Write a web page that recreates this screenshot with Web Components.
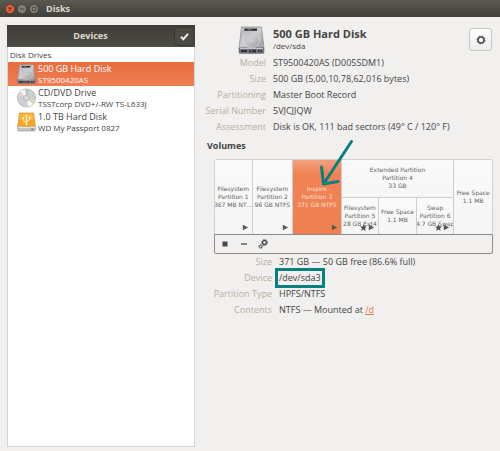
<!DOCTYPE html>
<html lang="en">
<head>
<meta charset="utf-8">
<title>Disks</title>
<style>
html, body { margin: 0; }
body { background: #f1f0ee; color: #444; font: 9px/16px "Open Sans", "Noto Sans", sans-serif; }
</style>
</head>
<body>
<disks-window></disks-window>
<script>
function define(name, html, setup) {
  const template = document.createElement('template');
  template.innerHTML = html;
  customElements.define(name, class extends HTMLElement {
    constructor() {
      super();
      this.attachShadow({ mode: 'open' }).append(template.content.cloneNode(true));
    }
    connectedCallback() { if (setup) setup(this, this.shadowRoot); }
  });
}

const DRIVES = {
  disk: `<svg viewBox="0 0 27 28">
    <defs>
      <linearGradient id="m" x1="0" y1="0" x2="1" y2="1"><stop offset="0" stop-color="#b4b4b8"/><stop offset=".5" stop-color="#cbcbce"/><stop offset="1" stop-color="#939398"/></linearGradient>
    </defs>
    <path d="M3.5 1h20l2.500 21H1z" fill="url(#m)" stroke="#8b8b90" stroke-width=".7"/>
    <path d="M1 22h25v4.500q0 .9-.9.9H1.900q-.9 0-.9-.9z" fill="#77777c" stroke="#606066" stroke-width=".5"/>
    <path d="M2 22.500h23" stroke="#dadadd" stroke-width=".8"/>
    <rect x="6.500" y="2.600" width="12.500" height="2.200" fill="#29292e"/>
    <path d="M9.500 3.700h4" stroke="#a4a4a8" stroke-width=".7"/>
    <path d="M7.500 9a8.500 7.500 0 1 0 12 0M11 14a3.500 2.500 0 0 0 6 0" fill="none" stroke="#e6e6e9" stroke-width=".6"/>
    <circle cx="4.700" cy="3.500" r=".6" fill="#f2f2f2"/><circle cx="22" cy="3.500" r=".6" fill="#f2f2f2"/>
    <circle cx="3" cy="19.500" r=".6" fill="#eee"/><circle cx="24" cy="19.500" r=".6" fill="#eee"/>
    <path d="M3 24h6v2H3zM11 23.800h7v2.400h-7zM20 24h1.500v2H20zM22.500 24H24v2h-1.500z" fill="#2d3037"/>
    <path d="M12 24.800h3" stroke="#7290b8" stroke-width=".8"/>
  </svg>`,
  disc: `<svg viewBox="0 0 20 20">
    <circle cx="10" cy="10" r="9.500" fill="#cfcfd1" stroke="#a2a2a5" stroke-width=".7"/>
    <path d="M10 10 3.500 3.200A9.200 9.200 0 0 1 8.500 1z" fill="#f8f8f8"/>
    <path d="M10 10 1.300 7a9.200 9.200 0 0 1 2.200-3.800z" fill="#e5cfe0"/>
    <path d="M10 10 8.500 1a9.200 9.200 0 0 1 4.500.4z" fill="#b9c8ba"/>
    <path d="M10 10 18.700 12a9.200 9.200 0 0 1-2.200 4.500z" fill="#d3e2ad"/>
    <path d="M10 10l6.500 6.500a9.200 9.200 0 0 1-4.500 2.500z" fill="#fafafa"/>
    <path d="M10 10l2 9a9.200 9.200 0 0 1-4.500-.300z" fill="#cfd6e3"/>
    <circle cx="10" cy="10" r="3.200" fill="#dedee0" stroke="#a5a5a8" stroke-width=".6"/>
    <circle cx="10" cy="10" r="1.400" fill="#fff" stroke="#959598" stroke-width=".5"/>
  </svg>`,
  usb: `<svg viewBox="0 0 20 20">
    <path d="M2.500.5h15L19.300 15H.7z" fill="#f6a623" stroke="#d98712" stroke-width=".6"/>
    <path d="M3.200 1.200h13.600l.9 7H2.300z" fill="#fbbe4b" opacity=".7"/>
    <path d="M.7 15h18.600v3.300q0 1.200-1.200 1.200H1.900q-1.200 0-1.200-1.200z" fill="#c5c5c4" stroke="#8c8c88" stroke-width=".6"/>
    <path d="M1.200 15.500h17.600" stroke="#f8f8f5"/>
    <path d="M15 17.600h2.200" stroke="#4a4a4a"/>
    <path d="M10 3v9.500M10 10.500 6.500 8.500V6M10 9l3.500-1.500V5.500" fill="none" stroke="#fff4d8" stroke-width="1"/>
    <path d="M8.700 4 10 1.700 11.300 4z" fill="#fff4d8"/><circle cx="10" cy="12.300" r="1.200" fill="#fff4d8"/>
    <circle cx="6.500" cy="5.800" r="1" fill="#fff4d8"/><path d="M12.500 4.300h2v2h-2z" fill="#fff4d8"/>
  </svg>`
};

define('drive-icon', `<style>
:host { display: block; flex: none; width: 19px; height: 20px; }
#art { height: 100%; }
svg { display: block; width: 100%; height: 100%; }
</style><div id="art"></div>`,
(host, root) => { root.getElementById('art').innerHTML = DRIVES[host.getAttribute('kind')]; });

define('title-bar', `<style>
:host { display: flex; align-items: center; gap: 2px; height: 17px; box-sizing: border-box; padding: 1px 5px 0; background: linear-gradient(#5a5850, #403f39); color: #dfdbd2; }
button { width: 10px; height: 10px; padding: 0; border: 0; background: none; }
svg { display: block; width: 10px; height: 10px; }
h1 { margin: 0 0 0 5px; font-size: 9px; line-height: 14px; font-weight: 700; }
</style>
<button aria-label="Close"><svg viewBox="0 0 10 10"><circle cx="5" cy="5" r="4.500" fill="#ee6136" stroke="#373631" stroke-width=".6"/><path d="m3.500 3.500 3 3m0-3-3 3" stroke="#6b2c1a" stroke-width="1.100"/></svg></button>
<button aria-label="Minimize"><svg viewBox="0 0 10 10"><circle cx="5" cy="5" r="4.500" fill="#828078" stroke="#373631" stroke-width=".6"/><path d="M3 5h4" stroke="#4a4943"/></svg></button>
<button aria-label="Maximize"><svg viewBox="0 0 10 10"><circle cx="5" cy="5" r="4.500" fill="#828078" stroke="#373631" stroke-width=".6"/><path d="M3.300 3.500h3.400v3H3.300z" fill="none" stroke="#4a4943" stroke-width=".9"/></svg></button>
<h1><slot></slot></h1>`);

define('device-row', `<style>
:host { display: block; }
button { display: flex; align-items: center; gap: 2px; width: 100%; height: 24px; padding: 0 9px; border: 0; background: none; color: inherit; font: inherit; text-align: left; }
:host([selected]) button { background: linear-gradient(#e86c3d, #f07f53); color: #fff; }
.text { display: block; line-height: 11px; }
.name, .model { display: block; white-space: nowrap; }
.model { font-size: 8px; }
</style>
<button><drive-icon></drive-icon><span class="text"><span class="name"><slot></slot></span><span class="model"><slot name="model"></slot></span></span></button>`,
(host, root) => {
  const icon = document.createElement('drive-icon');
  icon.setAttribute('kind', host.getAttribute('kind'));
  root.querySelector('drive-icon').replaceWith(icon);
});

define('device-panel', `<style>
:host { display: flex; flex-direction: column; box-sizing: border-box; background: #fff; border: 1px solid #d6d4d0; border-top: 0; }
header { display: flex; align-items: center; height: 22px; margin: 0 -1px; background: linear-gradient(#3d3c37, #4e4d46); color: #dfdbd2; }
h2 { flex: 1; margin: 0; text-align: center; font-size: 9px; line-height: 14px; }
button { width: 20px; height: 19px; margin-right: 1px; padding: 0; border: 1px solid #3a3934; border-radius: 3px; background: #4b4a43; display: grid; place-items: center; }
svg { display: block; width: 9px; height: 9px; }
h3 { margin: 0; padding-left: 2px; font-size: 8px; line-height: 15px; font-weight: 400; }
</style>
<header><h2>Devices</h2><button aria-label="Select devices"><svg viewBox="0 0 9 9"><path d="m1 4.800 2.300 2.400L8 1.800" fill="none" stroke="#eeebe4" stroke-width="2"/></svg></button></header>
<h3>Disk Drives</h3>
<slot></slot>`);

define('drive-header', `<style>
:host { display: flex; align-items: flex-start; gap: 8px; height: 30px; padding-left: 31px; }
drive-icon { width: 27px; height: 28px; margin-top: 1px; }
.text { flex: 1; white-space: nowrap; }
h2 { margin: 2px 0 0; font-size: 11px; line-height: 14px; }
p { margin: 0; font-size: 8px; line-height: 10px; }
button { width: 23px; height: 23px; margin: 3px 1px 0 0; padding: 0; border: 1px solid #c9c6c1; border-radius: 3px; background: linear-gradient(#fdfdfd, #ededec); display: grid; place-items: center; }
svg { display: block; width: 10px; height: 10px; }
</style>
<drive-icon kind="disk"></drive-icon>
<div class="text"><h2><slot></slot></h2><p><slot name="path"></slot></p></div>
<button aria-label="Drive options"><svg viewBox="0 0 10 10"><circle cx="5" cy="5" r="4" fill="none" stroke="#4d4d4d" stroke-width="1" stroke-dasharray="1.600 1.542"/><circle cx="5" cy="5" r="3" fill="none" stroke="#4d4d4d" stroke-width="1.600"/></svg></button>`);

define('info-row', `<style>
:host { display: flex; gap: 7px; line-height: 16px; white-space: nowrap; }
.label { flex: none; width: var(--label-width, 59px); display: flex; justify-content: flex-end; color: #b7ae9f; }
.value { position: relative; }
:host([marked]) .value::after { content: ""; position: absolute; inset: -2px -4px; border: 3px solid #07807f; pointer-events: none; }
::slotted(a) { color: #ef7446; }
</style><span class="label"><slot name="label"></slot></span><span class="value"><slot></slot></span>`);

define('volume-block', `<style>
:host { display: grid; position: relative; min-width: 0; }
button { display: grid; align-content: center; min-width: 0; padding: 0; border: 0; background: linear-gradient(#fafafa, #f5f5f5); color: #636363; font: 6px/8px "DejaVu Sans", sans-serif; text-align: center; white-space: pre; overflow: hidden; justify-content: center; }
:host([selected]) button { background: linear-gradient(#f4a080, #f08254 14px, #ee8052); color: #fce0d3; }
.marks { position: absolute; right: 3px; bottom: 3px; display: flex; gap: 1px; pointer-events: none; }
.marks svg { display: block; width: 7px; height: 7px; }
:host(:not([starred])) .star { display: none; }
:host([free]) .marks { display: none; }
::slotted(svg) { position: absolute; left: 24px; top: -22px; width: 38px; height: 52px; pointer-events: none; z-index: 2; }
</style>
<button><slot></slot></button>
<span class="marks"><svg class="star" viewBox="0 0 7 7"><path d="M3.500 0 4.500 2.400 7 2.600 5.100 4.300 5.700 7 3.500 5.500 1.300 7 1.900 4.300 0 2.600 2.500 2.400z" fill="#505050"/></svg><svg viewBox="0 0 7 7"><path d="M.8.700 6.200 3.500.8 6.300z" fill="#5a5550"/></svg></span>
<slot name="pointer"></slot>`);

define('volume-map', `<style>
:host { display: grid; grid-template-columns: 37fr 40fr 48fr 113fr 38fr; gap: 1px; height: 75px; box-sizing: border-box; background: #d0cecb; border: 1px solid #d3d1ce; border-bottom: 0; border-radius: 3px 3px 0 0; }
.extended { display: grid; grid-template: 1fr 1fr / repeat(3, minmax(0, 1fr)); gap: 1px; }
.wide { grid-column: 1 / -1; }
</style>
<volume-block>Filesystem
Partition 1
367 MB NT…</volume-block>
<volume-block>Filesystem
Partition 2
96 GB NTFS</volume-block>
<volume-block selected>Inspire
Partition 3
371 GB NTFS<svg slot="pointer" viewBox="0 0 38 52"><path d="M34.500 3.500 6.500 46M4.500 29 6.500 46 21 43.500" fill="none" stroke="#07807f" stroke-width="3" stroke-linecap="round" stroke-linejoin="round"/></svg></volume-block>
<div class="extended">
  <volume-block free class="wide">Extended Partition
Partition 4
33 GB</volume-block>
  <volume-block starred>Filesystem
Partition 5
28 GB Ext4</volume-block>
  <volume-block free>Free Space
1.1 MB</volume-block>
  <volume-block starred>Swap
Partition 6
4.7 GB Swap</volume-block>
</div>
<volume-block free>Free Space
1.1 MB</volume-block>`);

define('volume-toolbar', `<style>
:host { display: flex; align-items: center; gap: 9px; height: 20px; box-sizing: border-box; padding: 0 5px; border: 1px solid #8c8b89; border-radius: 0 0 2px 2px; }
button { width: 10px; height: 12px; padding: 0; border: 0; background: none; display: grid; place-items: center; }
svg { display: block; width: 10px; height: 10px; }
</style>
<button aria-label="Unmount"><svg viewBox="0 0 10 10"><path d="M2.500 2.500h5v5h-5z" fill="#484848"/></svg></button>
<button aria-label="Delete partition"><svg viewBox="0 0 10 10"><path d="M2 5h6" stroke="#484848" stroke-width="1.300"/></svg></button>
<button aria-label="More actions"><svg viewBox="0 0 10 10"><g fill="none" stroke="#484848"><circle cx="6.500" cy="3.500" r="2" stroke-width="1.300"/><circle cx="6.500" cy="3.500" r="3" stroke-width=".9" stroke-dasharray="1.200 1.156"/><circle cx="2.700" cy="7.500" r="1.300"/><circle cx="2.700" cy="7.500" r="2.100" stroke-width=".6" stroke-dasharray=".8 .849"/></g></svg></button>`);

define('disks-window', `<style>
:host { display: flex; flex-direction: column; min-height: 100vh; }
main { flex: 1; display: grid; grid-template-columns: minmax(188px, 39fr) minmax(286px, 59fr); gap: 12px; padding: 8px 7px 4px; }
h3 { margin: 3px 0 5px; font-size: 9px; line-height: 16px; }
.volumes { margin-left: 7px; }
.details { --label-width: 58px; }
</style>
<title-bar>Disks</title-bar>
<main>
  <device-panel>
    <device-row kind="disk" selected>500 GB Hard Disk<span slot="model">ST9500420AS</span></device-row>
    <device-row kind="disc">CD/DVD Drive<span slot="model">TSSTcorp DVD+/-RW TS-L633J</span></device-row>
    <device-row kind="usb">1.0 TB Hard Disk<span slot="model">WD My Passport 0827</span></device-row>
  </device-panel>
  <section>
    <drive-header>500 GB Hard Disk<span slot="path">/dev/sda</span></drive-header>
    <info-row><span slot="label">Model</span>ST9500420AS (D005SDM1)</info-row>
    <info-row><span slot="label">Size</span>500 GB (5,00,10,78,62,016 bytes)</info-row>
    <info-row><span slot="label">Partitioning</span>Master Boot Record</info-row>
    <info-row><span slot="label">Serial Number</span>5VJCJJQW</info-row>
    <info-row><span slot="label">Assessment</span>Disk is OK, 111 bad sectors (49° C / 120° F)</info-row>
    <h3>Volumes</h3>
    <div class="volumes">
      <volume-map></volume-map>
      <volume-toolbar></volume-toolbar>
      <div class="details">
        <info-row><span slot="label">Size</span>371 GB — 50 GB free (86.6% full)</info-row>
        <info-row marked><span slot="label">Device</span>/dev/sda3</info-row>
        <info-row><span slot="label">Partition Type</span>HPFS/NTFS</info-row>
        <info-row><span slot="label">Contents</span>NTFS — Mounted at <a href="#d">/d</a></info-row>
      </div>
    </div>
  </section>
</main>`);
</script>
</body>
</html>
